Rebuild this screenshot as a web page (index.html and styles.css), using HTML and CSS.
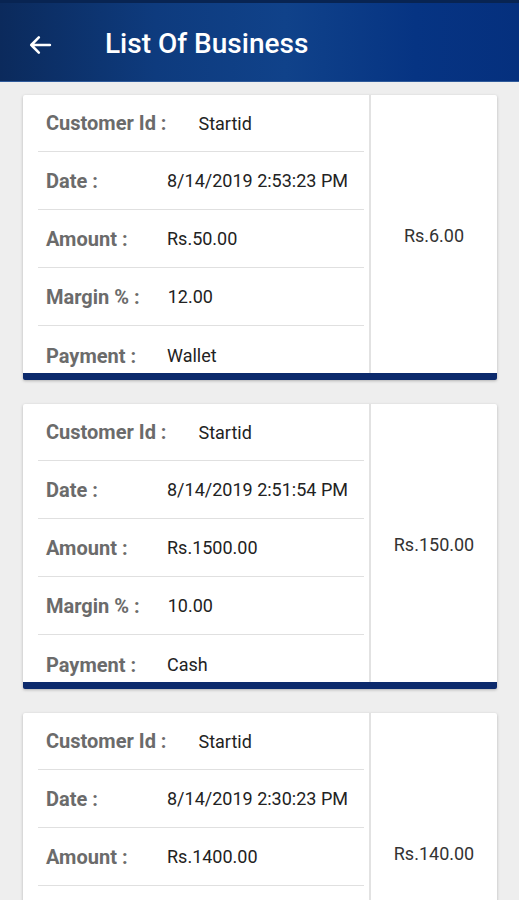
FILE: index.html
```html
<!DOCTYPE html>
<html lang="en">
<head>
	<meta charset="UTF-8">
	<title>List Of Business</title>
	<link rel="stylesheet" href="styles.css">
</head>
<body>
	<div class="header">
		<svg class="back" width="28" height="28" viewBox="0 0 24 24">
			<path d="M20.5 12H4.5M11 5.5L4.5 12l6.5 6.5" fill="none" stroke="#fff" stroke-width="2.2" stroke-linecap="round" stroke-linejoin="round"/>
		</svg>
		<div class="title">List Of Business</div>
	</div>
	<div class="list">
		<div class="card">
			<div class="info">
				<div class="row"><span class="label">Customer Id :</span><span class="value">Startid</span></div>
				<div class="row"><span class="label">Date :</span><span class="value">8/14/2019 2:53:23 PM</span></div>
				<div class="row"><span class="label">Amount :</span><span class="value">Rs.50.00</span></div>
				<div class="row"><span class="label">Margin % :</span><span class="value">12.00</span></div>
				<div class="row last"><span class="label">Payment :</span><span class="value">Wallet</span></div>
			</div>
			<div class="margin">Rs.6.00</div>
		</div>
		<div class="card">
			<div class="info">
				<div class="row"><span class="label">Customer Id :</span><span class="value">Startid</span></div>
				<div class="row"><span class="label">Date :</span><span class="value">8/14/2019 2:51:54 PM</span></div>
				<div class="row"><span class="label">Amount :</span><span class="value">Rs.1500.00</span></div>
				<div class="row"><span class="label">Margin % :</span><span class="value">10.00</span></div>
				<div class="row last"><span class="label">Payment :</span><span class="value">Cash</span></div>
			</div>
			<div class="margin">Rs.150.00</div>
		</div>
		<div class="card">
			<div class="info">
				<div class="row"><span class="label">Customer Id :</span><span class="value">Startid</span></div>
				<div class="row"><span class="label">Date :</span><span class="value">8/14/2019 2:30:23 PM</span></div>
				<div class="row"><span class="label">Amount :</span><span class="value">Rs.1400.00</span></div>
				<div class="row"><span class="label">Margin % :</span><span class="value">10.00</span></div>
				<div class="row last"><span class="label">Payment :</span><span class="value">Cash</span></div>
			</div>
			<div class="margin">Rs.140.00</div>
		</div>
	</div>
</body>
</html>
```

FILE: styles.css
```css
* {
	margin: 0;
	padding: 0;
	box-sizing: border-box;
}
body {
	background: #eeeeee;
	font-family: Roboto, "Noto Sans", sans-serif;
	height: 900px;
	overflow: hidden;
}
.header {
	height: 82px;
	display: flex;
	align-items: center;
	padding: 5px 0 0 26px;
	background: linear-gradient(to right, #0b2a5c 0%, #0e3b7e 30%, #10428a 55%, #063483 80%, #05307e 100%);
	border-top: 3px solid #082452;
	border-bottom: 1px solid #2f5a9a;
}
.title {
	margin-left: 51px;
	color: #fff;
	font-size: 28px;
	font-weight: 500;
	margin-top: -3px;
}
.list {
	padding: 13px 22px 0 23px;
	display: flex;
	flex-direction: column;
	gap: 24px;
}
.card {
	display: flex;
	background: #fff;
	border-bottom: 7px solid #0c2a6c;
	box-shadow: 0 1px 3px rgba(0, 0, 0, 0.25);
	border-radius: 2px;
}
.info {
	width: 348px;
	padding: 0 5px 0 15px;
	border-right: 2px solid #e2e2e2;
}
.row {
	height: 58px;
	display: flex;
	align-items: center;
	padding-left: 8px;
	border-bottom: 1px solid #e0e0e0;
}
.row:first-child {
	height: 57px;
}
.row:first-child .label {
	padding-right: 32px;
}
.row.last {
	height: 47px;
	border-bottom: none;
	padding-top: 12px;
}
.label {
	min-width: 121px;
	padding-right: 28px;
	color: #6b6b6b;
	font-size: 20px;
	font-weight: bold;
}
.value {
	color: #222;
	font-size: 18px;
}
.margin {
	flex: 1;
	display: flex;
	align-items: center;
	justify-content: center;
	color: #333;
	font-size: 18px;
	padding-top: 2px;
}
```
